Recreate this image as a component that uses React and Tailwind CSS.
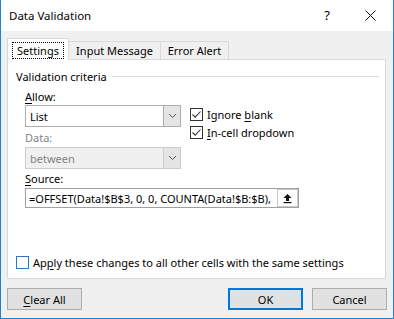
import React from "react";

function Box({ checked, className = "" }) {
    return (
        <span
            className={
                "w-[13px] h-[13px] border bg-white flex items-center justify-center shrink-0 " +
                className
            }
        >
            {checked && (
                <svg width="11" height="11" viewBox="0 0 11 11">
                    <path
                        d="M1.5 5.5 L4.2 8.2 L9.5 2.5"
                        fill="none"
                        stroke="#333"
                        strokeWidth="1.1"
                    />
                </svg>
            )}
        </span>
    );
}

function Chevron({ color = "#555" }) {
    return (
        <svg width="9" height="6" viewBox="0 0 9 6">
            <path
                d="M1 1 L4.5 4.5 L8 1"
                fill="none"
                stroke={color}
                strokeWidth="1"
            />
        </svg>
    );
}

function Select({ value, disabled }) {
    return (
        <div
            className={
                "h-[22px] border flex " +
                (disabled
                    ? "border-[#cccccc] bg-[#f0f0f0] text-[#838383]"
                    : "border-[#adadad] bg-white")
            }
        >
            <span className="flex-1 flex items-center pl-[4px]">
                {value}
            </span>
            <span
                className={
                    "w-[17px] flex items-center justify-center border-l " +
                    (disabled
                        ? "border-[#cccccc] bg-[#e5e5e5]"
                        : "border-[#adadad] bg-[#e5e5e5]")
                }
            >
                <Chevron />
            </span>
        </div>
    );
}

export default function App() {
    return (
        <div className="w-[394px] h-[319px] bg-[#f0f0f0] border-x border-b border-[#1a84d8] flex flex-col text-[11px] text-black font-['Noto_Sans',sans-serif] leading-none">
            <div className="h-[31px] bg-white flex items-center pl-[8px] pr-[17px] shrink-0">
                <span className="text-[11.5px]">Data Validation</span>
                <span className="ml-auto text-[13px]">?</span>
                <svg
                    className="ml-[35px]"
                    width="11"
                    height="11"
                    viewBox="0 0 11 11"
                >
                    <path
                        d="M0.5 0.5 L10.5 10.5 M10.5 0.5 L0.5 10.5"
                        stroke="#111"
                        strokeWidth="1"
                    />
                </svg>
            </div>

            <div className="flex items-end pl-[6px] pt-[7px]">
                <div className="w-[62px] h-[22px] -mb-px relative z-10 bg-white border-l border-t border-r border-[#d9d9d9] flex justify-center pt-[3px]">
                    <span className="h-[17px] px-[4px] flex items-center border border-dotted border-black">
                        Settings
                    </span>
                </div>
                <div className="w-[92px] h-[18px] border-t border-r border-[#d9d9d9] flex items-center justify-center">
                    Input Message
                </div>
                <div className="w-[68px] h-[18px] border-t border-r border-[#d9d9d9] flex items-center justify-center">
                    Error Alert
                </div>
            </div>

            <div className="ml-[6px] w-[379px] h-[220px] shrink-0 border border-[#d9d9d9] bg-white flex flex-col">
                <div className="flex items-center h-[16px] mt-[8px] ml-[8px]">
                    <span>Validation criteria</span>
                    <span className="flex-1 h-px bg-[#dcdcdc] ml-[5px] mr-[6px]" />
                </div>

                <div className="ml-[17px] mt-[4px]">
                    <div className="flex">
                        <div className="w-[156px]">
                            <div className="h-[16px] flex items-center">
                                <span>
                                    <span className="underline underline-offset-2">A</span>
                                    llow:
                                </span>
                            </div>
                            <div className="mt-[1px]">
                                <Select value="List" />
                            </div>
                            <div className="h-[16px] mt-[2px] flex items-center text-[#838383]">
                                Data:
                            </div>
                            <div className="mt-[2px]">
                                <Select value="between" disabled />
                            </div>
                        </div>

                        <div className="ml-[9px] mt-[17px]">
                            <div className="h-[18px] flex items-center">
                                <Box checked className="border-[#333]" />
                                <span className="ml-[4px]">
                                    Ignore{" "}
                                    <span className="underline underline-offset-2">b</span>
                                    lank
                                </span>
                            </div>
                            <div className="h-[18px] flex items-center">
                                <Box checked className="border-[#333]" />
                                <span className="ml-[4px]">
                                    <span className="underline underline-offset-2">I</span>
                                    n-cell dropdown
                                </span>
                            </div>
                        </div>
                    </div>

                    <div className="h-[16px] mt-[1px] flex items-center">
                        <span>
                            <span className="underline underline-offset-2">S</span>
                            ource:
                        </span>
                    </div>
                    <div className="mt-[2px] w-[274px] h-[20px] border border-[#a0a0a0] flex">
                        <span className="flex-1 flex items-center pl-[3px] whitespace-nowrap overflow-hidden">
                            =OFFSET(Data!$B$3, 0, 0, COUNTA(Data!$B:$B),
                        </span>
                        <span className="w-[21px] border border-[#c8c8c8] bg-white flex items-center justify-center">
                            <svg width="11" height="11" viewBox="0 0 11 11">
                                <path d="M5.5 1 L9.5 5 L7 5 L7 8 L4 8 L4 5 L1.5 5 Z" fill="#111" />
                                <rect x="1.5" y="9" width="8" height="1.2" fill="#111" />
                            </svg>
                        </span>
                    </div>
                </div>

                <div className="mt-auto mb-[8px] ml-[8px] h-[16px] flex items-center">
                    <Box className="border-[#2f73c4]" />
                    <span className="ml-[4px]">
                        Ap
                        <span className="underline underline-offset-2">p</span>
                        ly these changes to all other cells with the same settings
                    </span>
                </div>
            </div>

            <div className="mt-[9px] px-[6px] flex">
                <button className="w-[75px] h-[22px] border border-[#adadad] bg-[#e1e1e1] flex items-center justify-center">
                    <span>
                        <span className="underline underline-offset-2">C</span>
                        lear All
                    </span>
                </button>
                <button className="ml-auto w-[75px] h-[22px] border-2 border-[#0078d7] bg-[#e1e1e1] flex items-center justify-center">
                    OK
                </button>
                <button className="ml-[9px] w-[75px] h-[22px] border border-[#adadad] bg-[#e1e1e1] flex items-center justify-center">
                    Cancel
                </button>
            </div>
        </div>
    );
}
